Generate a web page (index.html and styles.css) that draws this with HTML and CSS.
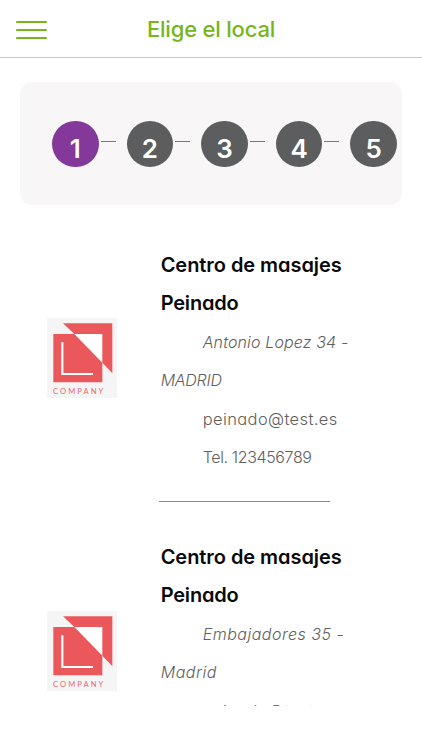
FILE: index.html
```html
<!DOCTYPE html>
<html lang="es">
<head>
<meta charset="utf-8">
<meta name="viewport" content="width=device-width, initial-scale=1">
<title>Elige el local</title>
<link rel="stylesheet" href="styles.css">
</head>
<body>
<header class="bar">
  <button class="menu" aria-label="Menú"><i></i><i></i><i></i></button>
  <h1>Elige el local</h1>
</header>
<main>
  <ol class="steps">
    <li class="step active"><b>1</b></li>
    <li class="step"><b>2</b></li>
    <li class="step"><b>3</b></li>
    <li class="step"><b>4</b></li>
    <li class="step"><b>5</b></li>
  </ol>
  <section class="list">
    <article class="place">
      <svg class="logo" viewBox="0 0 210 240">
        <rect width="210" height="240" fill="#f6f5f6"/>
        <path d="M82 48h84v86z" fill="#fff"/>
        <path d="M48 16h148v150l-30-32V48H82z" fill="#eb585c"/>
        <path d="M19 48h63l84 86v59H19z" fill="#eb585c"/>
        <path d="M46 73v95h92" fill="none" stroke="#fff" stroke-width="6.5"/>
        <text class="logo-text" x="18" y="228" textLength="151">COMPANY</text>
      </svg>
      <div class="info">
        <h2><span class="n1">Centro de masajes</span><br><span class="n2">Peinado</span></h2>
        <address><span class="a1">Antonio Lopez 34 -</span><br><span class="a2">MADRID</span></address>
        <p class="mail">peinado@test.es</p>
        <p class="tel">Tel. 123456789</p>
        <hr>
      </div>
    </article>
    <article class="place">
      <svg class="logo low" viewBox="0 0 210 240">
        <rect width="210" height="240" fill="#f6f5f6"/>
        <path d="M82 48h84v86z" fill="#fff"/>
        <path d="M48 16h148v150l-30-32V48H82z" fill="#eb585c"/>
        <path d="M19 48h63l84 86v59H19z" fill="#eb585c"/>
        <path d="M46 73v95h92" fill="none" stroke="#fff" stroke-width="6.5"/>
        <text class="logo-text" x="18" y="228" textLength="151">COMPANY</text>
      </svg>
      <div class="info">
        <h2><span class="n1">Centro de masajes</span><br><span class="n2">Peinado</span></h2>
        <address><span class="a3">Embajadores 35 -</span><br><span class="a4">Madrid</span></address>
        <p class="mail">peinado@test.es</p>
      </div>
    </article>
  </section>
</main>
</body>
</html>
```
FILE: styles.css
```css
* { box-sizing: border-box; margin: 0; padding: 0; }
body {
  height: 750px;
  overflow: hidden;
  background: #fff;
  font-family: Inter, "Open Sans", sans-serif;
  font-feature-settings: "cv11";
}
.bar {
  display: grid;
  grid-template-columns: 47px 1fr 47px;
  align-items: center;
  height: 58px;
  border-bottom: 1px solid #c6c6c6;
}
.menu {
  display: flex;
  flex-direction: column;
  gap: 5.6px;
  padding: 3px 0 0 16px;
  border: 0;
  background: none;
}
.menu i { height: 2px; border-radius: 1px; background: #76b51b; }
.bar h1 {
  padding-top: 1px;
  text-align: center;
  font-size: 22px;
  font-weight: 550;
  letter-spacing: -0.2px;
  color: #76b51b;
  font-feature-settings: normal;
}
.steps {
  display: flex;
  gap: 28px;
  width: 382px;
  height: 123px;
  margin: 24px 0 0 20px;
  padding: 38.5px 0 0 32px;
  border-radius: 12px;
  background: #f8f6f7;
  list-style: none;
}
.step {
  position: relative;
  flex: none;
  width: 46.6px;
  height: 46.6px;
  padding-top: 10px;
  border-radius: 50%;
  background: #5b5d5e;
  color: #fff;
  text-align: center;
  font-size: 26px;
  line-height: 36px;
}
.step b { font-weight: 600; }
.step.active { background: #843899; }
.step:not(:last-child)::after {
  content: "";
  position: absolute;
  left: 48.5px;
  top: 20.5px;
  width: 15px;
  height: 1px;
  background: #777976;
}
.list { height: 501px; overflow: hidden; padding-top: 40.5px; }
.place { display: flex; height: 292.3px; padding-left: 46.7px; }
.logo { flex: none; width: 70px; height: 80px; margin-top: 72.5px; }
.low { margin-top: 73.2px; }
.logo-text {
  fill: #e8686c;
  font: 400 23px Lato, sans-serif;
}
.info {
  padding-left: 44px;
  font-size: 16px;
  font-weight: 300;
  line-height: 38.5px;
  color: #606060;
  white-space: nowrap;
}
.info h2 { font-size: 20px; font-weight: 600; line-height: 38.5px; color: #0a0a0a; }
.n1 { letter-spacing: -0.05px; }
.n2 { letter-spacing: -0.2px; }
.a1, .a3, .mail, .tel { margin-left: 42px; }
.a1 { letter-spacing: 0.13px; }
.a2 { letter-spacing: -0.25px; }
.a3 { letter-spacing: 0.5px; }
.a4 { letter-spacing: 0.55px; }
.mail { font-size: 16.5px; letter-spacing: 0.38px; }
.tel { letter-spacing: -0.37px; }
.info hr { width: 171px; height: 1px; margin: 24.5px 0 0 -2px; border: 0; background: #85898e; }
```
